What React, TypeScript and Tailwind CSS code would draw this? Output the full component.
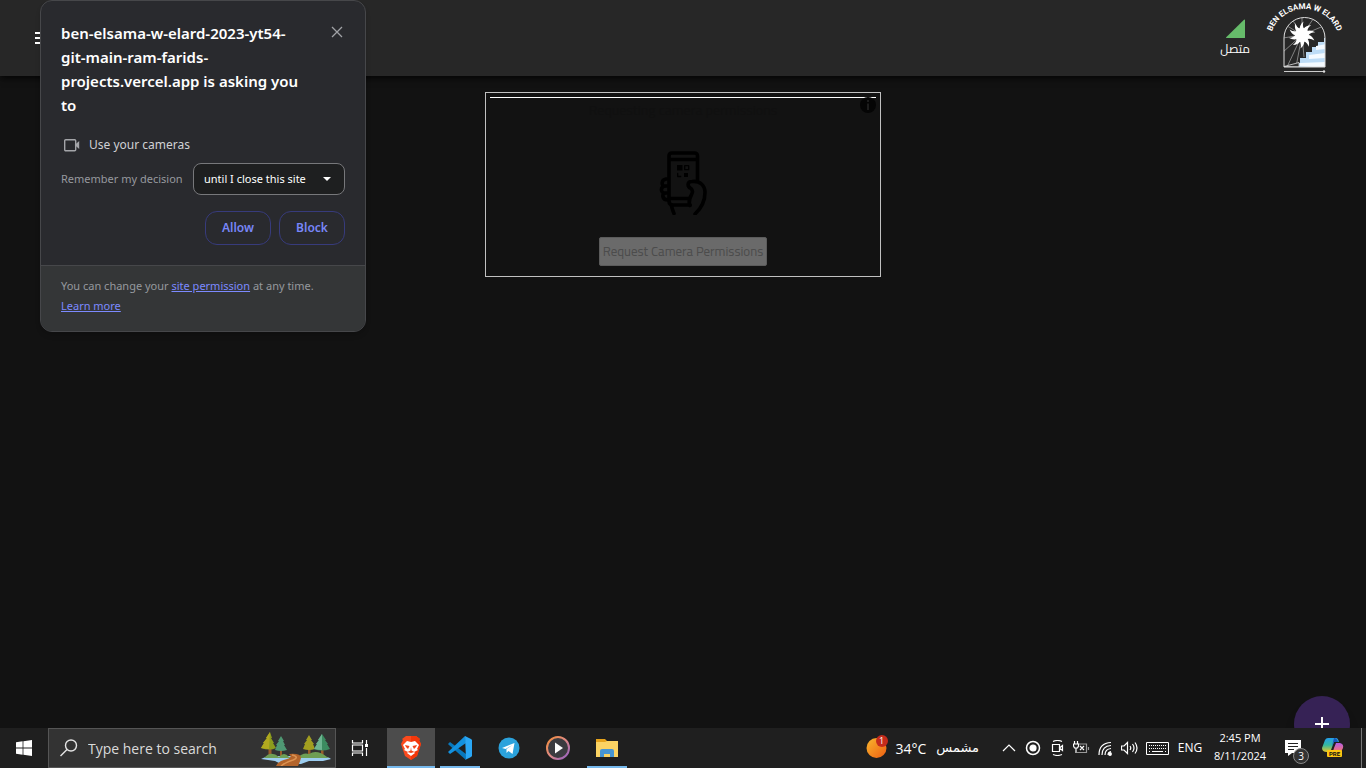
import type { ReactNode } from 'react';
import { clsx } from 'clsx';

function MenuIcon() {
  return (
    <svg viewBox="0 0 24 24" className="size-6 fill-current" aria-hidden="true">
      <path d="M3 18h18v-2H3v2zm0-5h18v-2H3v2zm0-7v2h18V6H3z" />
    </svg>
  );
}

const sunRays = [0, 36, 72, 108, 144, 180, 216, 252, 288, 324];

function BrandLogo() {
  return (
    <svg viewBox="0 0 76 72" className="h-[72px] w-[76px] overflow-visible" role="img" aria-label="Ben Elsama W Elard">
      <defs>
        <path id="brand-arc" d="M4 36A35 35 0 0 1 73 36" />
        <clipPath id="brand-arch">
          <path d="M18 65V36a20.500 20.500 0 0 1 41 0v29z" />
        </clipPath>
      </defs>
      <text fill="#fff" textAnchor="middle" fontWeight="700" fontSize="8" fontFamily="Roboto, sans-serif">
        <textPath href="#brand-arc" startOffset="50%">
          BEN ELSAMA W ELARD
        </textPath>
      </text>
      <g clipPath="url(#brand-arch)">
        <path
          d="M36 33 18 22M36 33 24 14M36 33 36 11M36 33 50 13M36 33 60 23M36 33 17 36M36 33 17 50M36 33 21 65M36 33 30 65M36 33 38 55"
          stroke="#aaa"
          strokeWidth=".7"
        />
        <path d="M60 36h-2v4h-6v5h-6v5h-6v6h-6v5h-3v4h29z" fill="#bddcf6" />
        <path d="M60 42 50 44v4l10-1zM60 51 43 53v4l17-1zM60 60l-26 1v3l26 2z" fill="#f4faff" />
        <path d="m18 64.500 15-4v4.500z" fill="#303030" stroke="#ddd" strokeWidth=".8" />
      </g>
      <g fill="#fff" transform="translate(36 33)">
        <circle r="7" />
        {sunRays.map((angle) => (
          <path key={angle} d="M-2.300-6Q-2.500-10 1.500-13.500 0-9 2.300-6z" transform={`rotate(${angle})`} />
        ))}
      </g>
      <path d="M18 65V36a20.500 20.500 0 0 1 41 0v29z" fill="none" stroke="#ddd" strokeWidth="1" />
      <path d="M18 69.500h39" stroke="#ccc" strokeWidth="1" />
      <circle cx="58" cy="69.500" r="1.200" fill="#ddd" />
    </svg>
  );
}

function HandPhoneIcon() {
  return (
    <svg
      viewBox="0 0 64 64"
      className="size-16 fill-none stroke-black"
      strokeWidth="3.600"
      strokeLinecap="round"
      strokeLinejoin="round"
      aria-hidden="true"
    >
      <path d="M46.500 29V5q0-3-3-3H21q-3 0-3 3v45q0 4 4 4h17M18 8.500h28M18 47.500h20" />
      <path d="M16 28h-1c-5 1-5 7-1 7h2M15 35c-6 0-6 7-1 7h2M15 42c-5 0-4 7 2 7" />
      <path d="M39 54.500c-2-4 0-8 2-12 1-2 1-3-1-5-4-2-4-7 1-7 8-1 13 4 13 11 0 8-4 16-10 21.500M20.500 55q1 4 2.500 7.500" />
      <path d="M26 14h5.500v5.500H26zM33 22h4v4h-4z" fill="#000" stroke="none" />
      <path d="M33.700 14.700h4v4h-4zM26.700 22.500v3h3" strokeWidth="1.300" />
    </svg>
  );
}

function InfoIcon() {
  return (
    <svg viewBox="0 0 16 16" className="size-4" aria-hidden="true">
      <circle cx="8" cy="8" r="8" fill="#050505" />
      <path d="M7 3h2v2H7zM7 6.500h2V13H7z" fill="#1d1d1d" />
    </svg>
  );
}

function PermissionDialog() {
  return (
    <section
      role="dialog"
      aria-labelledby="permission-title"
      className="absolute top-0 left-10 w-[326px] overflow-hidden rounded-xl border border-[#46474a] bg-[#292a2e] font-['Noto_Sans',sans-serif] shadow-md"
    >
      <div className="p-5">
        <div className="flex items-start justify-between">
          <h1 id="permission-title" className="w-60 text-[15px] leading-6 font-semibold text-white">
            ben-elsama-w-elard-2023-yt54-git-main-ram-farids-projects.vercel.app is asking you to
          </h1>
          <button type="button" aria-label="Close" className="flex size-4 items-center justify-center pt-1.5 text-[#a0a2a6]">
            <svg viewBox="0 0 12 12" className="size-3 shrink-0 stroke-current" strokeWidth="1.300">
              <path d="m1 1 10 10M11 1 1 11" />
            </svg>
          </button>
        </div>
        <div className="mt-4 flex h-6 items-center gap-2 pl-0.5 text-[12px] text-[#d0d1d4]">
          <svg viewBox="0 0 18 16" className="h-4 w-[18px] fill-none stroke-[#a4a5a9]" strokeWidth="1.400" aria-hidden="true">
            <rect x="1.700" y="2.700" width="11" height="11" rx="1" />
            <path d="M12.700 8 15.500 5.500v5z" fill="#a4a5a9" />
          </svg>
          <span>Use your cameras</span>
        </div>
        <div className="mt-1.5 flex items-center justify-between">
          <label htmlFor="remember" className="text-[11px] text-[#96999e]">
            Remember my decision
          </label>
          <div className="relative">
            <select
              id="remember"
              className="h-8 w-[152px] appearance-none rounded-lg border border-[#77787b] bg-[#1e1f20] pr-7 pl-2.5 text-[11px] text-white"
            >
              <option>until I close this site</option>
            </select>
            <svg viewBox="0 0 8 4" className="pointer-events-none absolute top-3.5 right-3.5 h-1 w-2 fill-white" aria-hidden="true">
              <path d="M0 0h8L4 4z" />
            </svg>
          </div>
        </div>
        <div className="mt-4 flex justify-end gap-2">
          {['Allow', 'Block'].map((label) => (
            <button
              key={label}
              type="button"
              className="h-[34px] w-[66px] rounded-xl border border-[#373b7c] text-[12px] font-semibold text-[#7886f8]"
            >
              {label}
            </button>
          ))}
        </div>
      </div>
      <p className="border-t border-[#46474a] bg-[#343637] px-5 pt-2.5 pb-[15px] text-[11px] leading-5 text-[#96999e]">
        You can change your{' '}
        <a href="#permissions" className="text-[#7c8aff] underline">
          site permission
        </a>{' '}
        at any time.
        <br />
        <a href="#learn-more" className="text-[#7c8aff] underline">
          Learn more
        </a>
      </p>
    </section>
  );
}

function AppHeader() {
  return (
    <header className="flex h-[76px] items-center justify-between bg-[#272727] pr-6 pl-8 text-white shadow-md shadow-black/50">
      <button type="button" aria-label="Menu">
        <MenuIcon />
      </button>
      <div className="flex items-center gap-4">
        <div className="flex flex-col items-center pt-0.5">
          <svg viewBox="0 0 20 20" className="size-5 fill-[#66bb6a]" aria-hidden="true">
            <path d="M20 1v17.500q0 .5-.5.5H1.500q-1 0-.3-.8L19 .800q1-.800 1 .2z" />
          </svg>
          <span dir="rtl" lang="ar" className="font-['Cairo','DejaVu_Sans',sans-serif] text-[12px] leading-5">
            متصل
          </span>
        </div>
        <BrandLogo />
      </div>
    </header>
  );
}

function Scanner() {
  return (
    <main className="flex justify-center pt-4 font-['Cairo','Titillium_Web',Roboto,sans-serif]">
      <div className="relative w-[396px] border border-[#c0c0c0] p-1 pb-2.5">
        <div className="flex flex-col items-center border-t border-white">
          <p className="mt-0.5 text-[14px] leading-5 text-[#101010]">Requesting camera permissions</p>
          <div className="mt-[31px]">
            <HandPhoneIcon />
          </div>
          <button
            type="button"
            disabled
            className="mt-[22px] h-[29px] rounded-xs border border-[#5b5b5b] bg-[#6a6a6a] px-[3px] text-[13px] text-[#4c4c4c]"
          >
            Request Camera Permissions
          </button>
        </div>
        <button type="button" aria-label="Info" className="absolute top-1 right-1">
          <InfoIcon />
        </button>
      </div>
    </main>
  );
}

function WindowsIcon() {
  return (
    <svg viewBox="0 0 16 16" className="size-4 fill-white">
      <path d="M0 2.200 6.600 1.300v6.300H0zM7.400 1.200 16 0v7.600H7.400zM0 8.400h6.600v6.300L0 13.800zM7.400 8.400H16V16l-8.600-1.200z" />
    </svg>
  );
}

function ForestIcon() {
  return (
    <svg viewBox="0 0 70 36" className="h-9 w-[70px]" aria-hidden="true">
      <path d="M0 29q5-3 15-3h45q8 1 10 3l-8 2H48l-8 3H20l-6-3z" fill="#9ccdf0" />
      <path d="M7.500 18h3v9h-3zM19 19h2v8h-2zM47 19h2.500v8H47zM60 18h2.500v9H60z" fill="#9a5b2b" />
      <path d="m9 2-4 6h1l-4 5h1l-3 5q9 3 15 0l-3-5h1l-3-5h1z" fill="#8c9c1d" />
      <path d="m9 2-4 6h1l-4 5h1l-3 5q4 1 8 1z" fill="#b1a91f" />
      <path d="m20 6-3 5h1l-3 4h1l-2 5q6 2 12 0l-3-5h1l-2-4h1z" fill="#4f9873" />
      <path d="m48 5-3 5h1l-3 4h1l-2 5q6 2 12 0l-2-5h1l-3-4h1z" fill="#a29e20" />
      <path d="m61 4-4 6h1l-3 4h1l-3 5q8 3 16 0l-3-5h1l-3-4h1z" fill="#3c8b60" />
      <path d="m61 4-4 6h1l-3 4h1l-3 5q4 1 8 1z" fill="#6eb491" />
      <path d="M3 28q7-8 15-1 5-6 10 0l3 1zM36 28q6-6 12-4 8-5 18 3l2 1z" fill="#6e9e55" />
      <path d="M28 24q12-1 12 4-1 4-3 8H15q2-5 11-7 6-2 2-5z" fill="#b3642b" />
      <path d="M31 25q8 2 1 5-7 2-12 6" fill="none" stroke="#dc9352" strokeWidth="1.500" />
    </svg>
  );
}

function BraveIcon() {
  return (
    <svg viewBox="0 0 22 24" className="h-6 w-[22px]">
      <path d="m6 0-4 3 1 1-2 4 4 12 6 4 6-4 4-12-2-4 1-1-4-3z" fill="#fb4a1d" />
      <path d="M11 0h5l4 3-1 1 2 4-4 12-6 4z" fill="#f3370a" />
      <path d="m7 5 4 1 4-1 4 4-2 4 1 1-4 2 1 1-4 3-4-3 1-1-4-2 1-1-2-4z" fill="#fff" />
      <path d="m5 9 4.500 1-1.500 3-2-2zM17 9l-4.500 1 1.500 3 2-2zM11 11l.5 3.500 3 1.500-3.500 1-3.500-1 3-1.500z" fill="#f2441a" />
    </svg>
  );
}

function CodeIcon() {
  return (
    <svg viewBox="0 0 24 24" className="size-6">
      <path d="m0 8 2-2 16 12v6L1 9z" fill="#0878bd" />
      <path d="M0 16 17 0l1 7L2 18z" fill="#1391df" />
      <path d="m17 0 6 3 1 1v16l-1 1-6 3 1-1z" fill="#2aa7f5" />
    </svg>
  );
}

function TelegramIcon() {
  return (
    <svg viewBox="0 0 22 22" className="size-[22px]">
      <circle cx="11" cy="11" r="10.500" fill="#2ba2dc" />
      <path d="m4 11 12.500-5-2 11-4-3-2 2v-4l6-4-7 4z" fill="#fff" />
    </svg>
  );
}

function PlayerIcon() {
  return (
    <svg viewBox="0 0 24 24" className="size-6">
      <defs>
        <linearGradient id="player-ring" x1="0" y1="0" x2="1" y2="1">
          <stop stopColor="#f28d38" />
          <stop offset=".5" stopColor="#df8a86" />
          <stop offset="1" stopColor="#8c5cc8" />
        </linearGradient>
      </defs>
      <circle cx="12" cy="12" r="11" fill="#3b3b40" stroke="url(#player-ring)" strokeWidth="2" />
      <path d="M9 6.500v11l8-5.500z" fill="#fff" />
    </svg>
  );
}

function FolderIcon() {
  return (
    <svg viewBox="0 0 22 20" className="h-5 w-[22px]">
      <path d="M0 1h9l2 2h11v15H0z" fill="#e6a31b" />
      <path d="M0 4h9l2-1h11v16H0z" fill="#fbd363" />
      <path d="M4 19v-6q0-2 2-2h10q2 0 2 2v6h-4v-3H8v3z" fill="#4795d2" />
    </svg>
  );
}

function CopilotIcon() {
  return (
    <svg viewBox="0 0 22 22" className="size-[22px]">
      <defs>
        <linearGradient id="copilot-left" x1="0" y1="0" x2="0" y2="1">
          <stop stopColor="#249eea" />
          <stop offset=".5" stopColor="#34b9a0" />
          <stop offset="1" stopColor="#efc923" />
        </linearGradient>
        <linearGradient id="copilot-right" x1="0" y1="0" x2="0" y2="1">
          <stop stopColor="#b45ce8" />
          <stop offset="1" stopColor="#fb7963" />
        </linearGradient>
      </defs>
      <path d="M6 1h8q2 0 3 4h-5L9 13q-1 3-4 2-5 0-5-4L3 3q1-2 3-2z" fill="url(#copilot-left)" />
      <path d="M14 6h4q4 1 3 5l-2 4H9q2 0 3-4z" fill="url(#copilot-right)" />
      <path d="M12 1q3 0 4 4h-4l-2 4z" fill="#1757bc" />
      <rect x="5" y="13" width="15" height="7" rx="1" fill="#fdc511" />
      <text x="12.500" y="19" fontSize="6" fontWeight="700" textAnchor="middle" fill="#111" fontFamily="Roboto, sans-serif">
        PRE
      </text>
    </svg>
  );
}

const apps: { name: string; icon: ReactNode; open?: boolean; active?: boolean }[] = [
  { name: 'Brave', icon: <BraveIcon />, open: true, active: true },
  { name: 'Visual Studio Code', icon: <CodeIcon />, open: true },
  { name: 'Telegram', icon: <TelegramIcon /> },
  { name: 'Media Player', icon: <PlayerIcon /> },
  { name: 'File Explorer', icon: <FolderIcon />, open: true },
];

const trayIcons: { name: string; drawing: ReactNode }[] = [
  { name: 'Show hidden icons', drawing: <path d="m2 11 6-6 6 6" /> },
  {
    name: 'Recording',
    drawing: (
      <>
        <circle cx="8" cy="8" r="6.500" strokeWidth="1.500" />
        <circle cx="8" cy="8" r="3" fill="#fff" />
      </>
    ),
  },
  {
    name: 'Meet now',
    drawing: <path d="M4 1.500q4.500-2 9 0M4 14.500q4.500 2 9 0M3.500 4.500h7v7h-7zM10.500 8l3-2.500v5z" />,
  },
  {
    name: 'Battery',
    drawing: (
      <>
        <path d="M5 4h8.500v8.500H4M15.500 7v3" stroke="#999" />
        <path d="M1.500 1v3M4.500 1v3M.5 4h5v2l-1 2h-3l-1-2zM3 8v5M7 6l4 4M11 6l-4 4" />
      </>
    ),
  },
  {
    name: 'Network',
    drawing: (
      <>
        <path d="M2 15Q2 3 14 2.500M5 15Q5 6 14 5.500M8 15q0-6 6-6.500M11 15q0-3 3-3.500" />
        <circle cx="13" cy="14" r="1.300" fill="#fff" />
      </>
    ),
  },
  {
    name: 'Volume',
    drawing: <path d="M.5 6H3l3.500-3.500v11L3 10H.5zM9 6q1.500 2 0 4M11.500 4q3 4 0 8M14 2.500q4 5.500 0 11" />,
  },
];

function Taskbar() {
  return (
    <footer className="flex h-10 shrink-0 items-stretch justify-between bg-[#1f1f1f] font-['Open_Sans',sans-serif] text-white">
      <div className="flex">
        <button type="button" aria-label="Start" className="flex w-12 items-center justify-center">
          <WindowsIcon />
        </button>
        <label className="flex w-72 items-center border border-[#555] bg-[#333] pr-1 pl-[11px]">
          <svg viewBox="0 0 18 18" className="size-[18px] shrink-0 fill-none stroke-[#e4e4e4]" strokeWidth="1.400" aria-hidden="true">
            <circle cx="11" cy="6.500" r="5.500" />
            <path d="m7 10.500-6.500 6.500" />
          </svg>
          <input
            type="search"
            aria-label="Search"
            placeholder="Type here to search"
            className="min-w-0 flex-1 bg-transparent pl-2.5 text-[14px] placeholder:text-[#dadada]"
          />
          <ForestIcon />
        </label>
        <button type="button" aria-label="Task view" className="flex w-12 items-center justify-center">
          <svg viewBox="0 0 18 18" className="size-[18px] fill-none stroke-white" strokeWidth="1.200">
            <path d="M1.500 1v3h10V1M1.500 6h10v6h-10zM1.500 17v-3h10v3M15.500 1v4M15.500 9v8" />
            <path d="M14 5h3v3h-3z" fill="#fff" stroke="none" />
          </svg>
        </button>
        <nav aria-label="Apps" className="ml-[3px] flex gap-px">
          {apps.map((app) => (
            <button
              key={app.name}
              type="button"
              aria-label={app.name}
              className={clsx('relative flex w-12 items-center justify-center', app.active && 'bg-[#4c4c4c]')}
            >
              {app.icon}
              {app.open && (
                <span className={clsx('absolute bottom-0 h-0.5 bg-[#76b9ed]', app.active ? 'inset-x-0' : 'inset-x-1')} />
              )}
            </button>
          ))}
        </nav>
      </div>

      <div className="flex">
        <button type="button" className="flex items-center pr-[18px] text-[14px]">
          <span className="relative mr-2 block size-[22px]">
            <svg viewBox="0 0 22 22" className="size-[22px]" aria-hidden="true">
              <defs>
                <linearGradient id="sun" x1="0" y1="0" x2="1" y2="1">
                  <stop stopColor="#f8b62d" />
                  <stop offset="1" stopColor="#ee5e12" />
                </linearGradient>
              </defs>
              <circle cx="10.500" cy="11" r="10" fill="url(#sun)" />
            </svg>
            <span className="absolute -top-0.5 right-0 flex size-3 items-center justify-center rounded-full bg-[#c42b1c] text-[9px] leading-3">
              1
            </span>
          </span>
          <span>34°C</span>
          <span dir="rtl" lang="ar" className="ml-2.5 font-['DejaVu_Sans',sans-serif] text-[13px]">
            مشمس
          </span>
        </button>
        {trayIcons.map((icon) => (
          <button key={icon.name} type="button" aria-label={icon.name} className="flex w-6 items-center justify-center">
            <svg viewBox="0 0 17 16" className="h-4 w-[17px] fill-none stroke-white" strokeWidth="1.200">
              {icon.drawing}
            </svg>
          </button>
        ))}
        <button type="button" aria-label="Touch keyboard" className="flex w-8 items-center justify-center">
          <svg viewBox="0 0 23 13" className="h-[13px] w-[23px] fill-none stroke-white" strokeWidth="1">
            <path d="M.5.5h22v12H.5z" />
            <path d="M3 3.500h17M3 6.500h17" strokeDasharray="1 1" />
            <path d="M3 9.500h1M6 9.500h11M19 9.500h1" />
          </svg>
        </button>
        <button type="button" className="w-[34px] text-[12px]">
          ENG
        </button>
        <button type="button" className="w-[66px] pb-0.5 text-center text-[11px] leading-[18px] whitespace-nowrap">
          2:45 PM
          <br />
          8/11/2024
        </button>
        <button type="button" aria-label="Notifications" className="relative flex w-10 items-center justify-center">
          <svg viewBox="0 0 18 16" className="h-4 w-[18px]">
            <path d="M1 0h16v13H8l-4 3v-3H1z" fill="#fff" />
            <path d="M4 3.500h10M4 6.500h10M4 9.500h6" stroke="#222" />
          </svg>
          <span className="absolute right-1 bottom-1 flex size-4 items-center justify-center rounded-full border border-[#888] bg-[#333] text-[10px] leading-4">
            3
          </span>
        </button>
        <button type="button" aria-label="Copilot" className="flex w-10 items-center justify-center">
          <CopilotIcon />
        </button>
        <span className="ml-2 w-[5px] border-l border-[#777]" />
      </div>
    </footer>
  );
}

export default function App() {
  return (
    <div className="flex h-screen flex-col bg-[#121212]">
      <div className="relative flex-1 overflow-hidden">
        <AppHeader />
        <Scanner />
        <button
          type="button"
          aria-label="Add"
          className="absolute right-4 -bottom-6 flex size-14 items-center justify-center rounded-full bg-[#362255] text-white shadow-lg"
        >
          <svg viewBox="0 0 24 24" className="size-6 fill-current">
            <path d="M19 13h-6v6h-2v-6H5v-2h6V5h2v6h6v2z" />
          </svg>
        </button>
        <PermissionDialog />
      </div>
      <Taskbar />
    </div>
  );
}
